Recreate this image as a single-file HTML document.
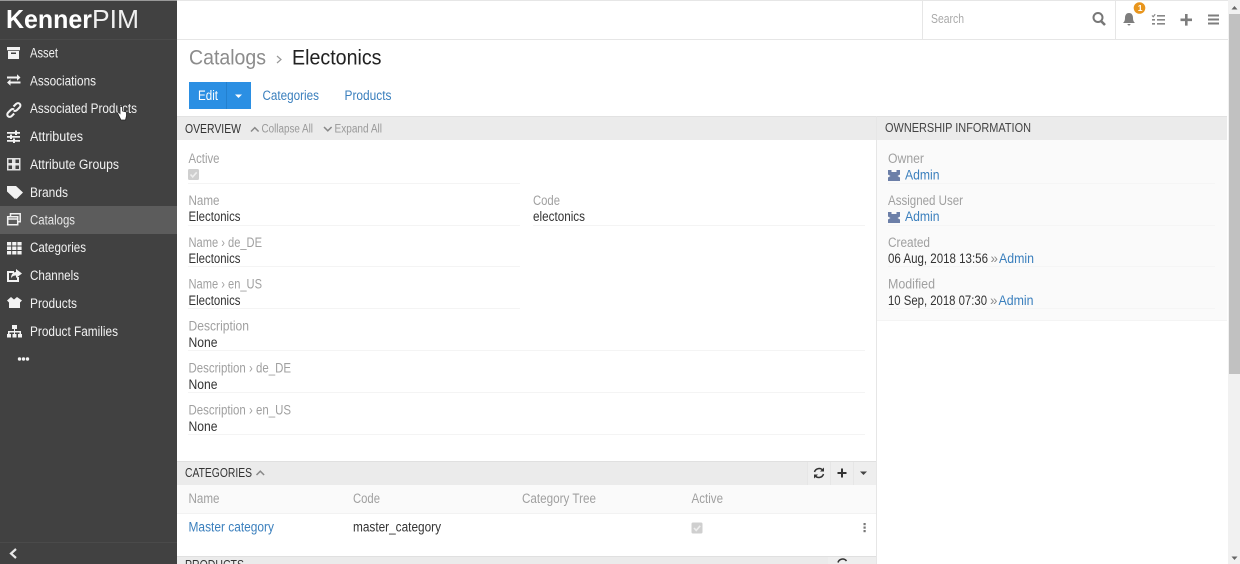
<!DOCTYPE html>
<html><head><meta charset="utf-8"><title>Electonics</title>
<style>
html,body{margin:0;padding:0;width:1240px;height:564px;overflow:hidden;background:#fff}
svg{display:block;position:absolute;left:0;top:0}
text{font-family:"Liberation Sans",sans-serif;font-size:13.400px}
.s{fill:#f2f2f2}.l{fill:#a0a0a0}.v{fill:#333}.a{fill:#3a7fbd}.g{fill:#8a8a8a}
</style></head><body>
<svg width="1240" height="564" viewBox="0 0 1240 564" xmlns="http://www.w3.org/2000/svg">
<defs><g id="chk"><rect width="11" height="11" rx="1.500" fill="#cfcfcf"/><path d="M2.500 5.500l2.200 2.400 4-4.600" fill="none" stroke="#eee" stroke-width="1.600"/></g>
<g id="usr"><path d="M0 0h3.500v2h5V0H12v4.500l-2.500 1.500L12 7.500V11H0V7.500L2.500 6 0 4.500z" fill="#6c7fa8"/></g></defs>
<!-- sidebar -->
<rect width="177" height="564" fill="#414141"/>
<rect y="0" width="177" height="1" fill="#999"/>
<rect y="39" width="177" height="1" fill="#4a4a4a"/>
<rect y="206" width="177" height="28" fill="#5c5c5c"/>
<rect y="542" width="177" height="1" fill="#4a4a4a"/>
<text x="6" y="28" font-weight="bold" fill="#fff" style="font-size:26px" textLength="86" lengthAdjust="spacingAndGlyphs">Kenner</text>
<text x="92" y="28" fill="#f0f0f0" style="font-size:26px" textLength="47" lengthAdjust="spacingAndGlyphs">PIM</text>
<text class="s" x="30" y="57.500" textLength="28" lengthAdjust="spacingAndGlyphs">Asset</text>
<text class="s" x="30" y="85.500" textLength="66" lengthAdjust="spacingAndGlyphs">Associations</text>
<text class="s" x="30" y="113" textLength="107" lengthAdjust="spacingAndGlyphs">Associated Products</text>
<text class="s" x="30" y="141" textLength="53" lengthAdjust="spacingAndGlyphs">Attributes</text>
<text class="s" x="30" y="169" textLength="89" lengthAdjust="spacingAndGlyphs">Attribute Groups</text>
<text class="s" x="30" y="197" textLength="38" lengthAdjust="spacingAndGlyphs">Brands</text>
<text fill="#e8e8e8" x="30" y="224.500" textLength="45" lengthAdjust="spacingAndGlyphs">Catalogs</text>
<text class="s" x="30" y="252" textLength="56" lengthAdjust="spacingAndGlyphs">Categories</text>
<text class="s" x="30" y="280" textLength="49" lengthAdjust="spacingAndGlyphs">Channels</text>
<text class="s" x="30" y="308" textLength="47" lengthAdjust="spacingAndGlyphs">Products</text>
<text class="s" x="30" y="336" textLength="88" lengthAdjust="spacingAndGlyphs">Product Families</text>
<!-- sidebar icons -->
<g fill="#f2f2f2">
<path d="M7 47h13v3.200H7zM8 51h11v8H8z"/><rect x="11" y="52.500" width="5" height="1.500" fill="#414141"/>
<path d="M7 76.500h10v-2.200l3.500 3.200-3.500 3.200v-2.200H7zM20.500 81.500h-10v-2.200L7 82.500l3.500 3.200v-2.200h10z"/>
<path d="M13.500 106.500l2.500-2.500c1.200-1.200 2.800-1.200 3.700-.2s1 2.500-.2 3.700l-2.500 2.500c-1 1-2.300 1.100-3.300.5M14 109.500c-1-.6-2.300-.5-3.300.5l-2.500 2.500c-1.200 1.200-1.200 2.800-.2 3.700s2.500 1 3.700-.2l2.500-2.500M11.500 111.500" fill="none" stroke="#f2f2f2" stroke-width="2"/>
<path d="M7 132h13v1.800H7zM7 136h13v1.800H7zM7 140h13v1.800H7z"/><path d="M15 130.500h2v4.500h-2zM10 134.500h2v4.500h-2zM13 138.500h2v4.500h-2z"/>
<path fill-rule="evenodd" opacity=".9" d="M7 158h13.500v12.500H7zM8.500 159.500v3.500H12v-3.500zM15.500 159.500v3.500h3.500v-3.500zM8.500 165.500v3.500H12v-3.500zM15.500 165.500v3.500h3.500v-3.500z"/><rect x="12" y="163" width="3.500" height="2.500" opacity=".9"/>
<path d="M7 186h7l7.500 6.500-6.500 6.500-8-7.500zM16 186l7 6.500-6.500 6.500-1-1 5-5.500-6.500-6.500z"/>
<path fill="none" stroke="#f2f2f2" stroke-width="1.500" d="M10.500 217v-3.200h9.700v8h-2.500M7.700 216.700h10v8h-10zM7.700 219h10"/>
<path d="M7 242h4.200v3.500H7zM12.200 242h4.200v3.500h-4.200zM17.400 242h4.200v3.500h-4.200zM7 246.500h4.200V250H7zM12.200 246.500h4.200V250h-4.200zM17.400 246.500h4.200V250h-4.200zM7 251h4.200v3.500H7zM12.200 251h4.200v3.500h-4.200zM17.400 251h4.200v3.500h-4.200z"/>
<path d="M7 271h7v2H9v7h8v-3h2v5H7z"/><path d="M16 269l6 4.500-6 4.500v-2.500c-2 0-4 .5-5 3 0-4 2-6.500 5-6.500z"/>
<path d="M7 300.500l4-3.500 3 2.500 3-2.500 5 3.500-2 2v5.500H9V302.500z"/>
<path d="M12 325h5v4h-5zM14 329h1v2h6v3h-1.500v-1.500H15v1.500h-1v-1.500H9.500v1.500H8v-3h6z"/><path d="M7 334h4v3.500H7zM12.500 334h4v3.500h-4zM18 334h4v3.500h-4z"/>
<circle cx="19.500" cy="359" r="1.700"/><circle cx="23.500" cy="359" r="1.700"/><circle cx="27.500" cy="359" r="1.700"/>
</g>
<path d="M16 549l-5 4.500 5 4.500" fill="none" stroke="#e8e8e8" stroke-width="2.200"/>
<!-- hand cursor -->
<path d="M120 106.500h2.500v4.500l4 1v4l-1 4h-4.500l-2.500-5-1-2 1.500-.5 1 1z" fill="#fff" stroke="#222" stroke-width=".8"/>
<!-- top bar -->
<rect x="177" y="0" width="1051" height="1" fill="#e6e6e6"/>
<rect x="177" y="39" width="1051" height="1" fill="#e6e6e6"/>
<rect x="922" y="0" width="1" height="39" fill="#e6e6e6"/>
<rect x="1115" y="0" width="1" height="39" fill="#e6e6e6"/>
<text x="931" y="23" fill="#aaa" style="font-size:12.500px" textLength="33" lengthAdjust="spacingAndGlyphs">Search</text>
<circle cx="1098" cy="17.500" r="4.500" fill="none" stroke="#777" stroke-width="2"/><path d="M1101 21l4 4" stroke="#777" stroke-width="2.600" fill="none"/>
<path d="M1129 13c3 0 4 2.500 4 5 0 3 1 4 2 5h-12c1-1 2-2 2-5 0-2.500 1-5 4-5zM1127.500 24h3c0 1-.7 1.500-1.500 1.500s-1.500-.5-1.500-1.500z" fill="#7d7d7d"/>
<circle cx="1139.500" cy="8" r="5.800" fill="#e8951c"/><text x="1137.800" y="11" fill="#fff" font-weight="bold" style="font-size:8.500px">1</text>
<path d="M1157 15h8v1.600h-8zM1157 19h8v1.600h-8zM1157 23h8v1.600h-8zM1152 19h3v1.600h-3zM1152 23h3v1.600h-3z" fill="#888"/><path d="M1152 15.500l1.200 1.200 2-2.500" stroke="#888" fill="none" stroke-width="1.200"/>
<path d="M1185 14h2.600v4.500h4.400v2.600h-4.400v4.500H1185v-4.500h-4.500v-2.600h4.500z" fill="#7d7d7d"/>
<path d="M1208 14.500h11v2h-11zM1208 18.500h11v2h-11zM1208 22.500h11v2h-11z" fill="#7d7d7d"/>
<!-- title -->
<text x="189" y="64.500" fill="#8c8c8c" style="font-size:21.500px" textLength="77" lengthAdjust="spacingAndGlyphs">Catalogs</text>
<path d="M277 56l4 3.500-4 3.500" fill="none" stroke="#999" stroke-width="1.200"/>
<text x="292" y="64.500" fill="#222" style="font-size:21.500px" textLength="89.500" lengthAdjust="spacingAndGlyphs">Electonics</text>
<!-- buttons -->
<rect x="189" y="82" width="62" height="27" fill="#2b8fe3"/>
<rect x="226" y="82" width="1" height="27" fill="#2380cf"/>
<text x="198" y="100" fill="#fff" textLength="20" lengthAdjust="spacingAndGlyphs">Edit</text>
<path d="M235 94.500h7l-3.500 3.500z" fill="#fff"/>
<text class="a" x="262.500" y="100" textLength="56.500" lengthAdjust="spacingAndGlyphs">Categories</text>
<text class="a" x="344.500" y="100" textLength="47" lengthAdjust="spacingAndGlyphs">Products</text>
<!-- overview head -->
<rect x="177" y="117" width="699" height="23" fill="#ebebeb"/>
<rect x="177" y="116" width="699" height="1" fill="#e2e2e2"/>
<text x="185" y="133" fill="#333" style="font-size:13px" textLength="56" lengthAdjust="spacingAndGlyphs">OVERVIEW</text>
<path d="M251 131.500l3.800-3.800 3.800 3.800" fill="none" stroke="#888" stroke-width="1.500"/>
<text x="261.500" y="132.500" fill="#999" style="font-size:11.500px" textLength="51.500" lengthAdjust="spacingAndGlyphs">Collapse All</text>
<path d="M324 127l3.800 3.800 3.800-3.800" fill="none" stroke="#888" stroke-width="1.500"/>
<text x="334.500" y="132.500" fill="#999" style="font-size:11.500px" textLength="47.500" lengthAdjust="spacingAndGlyphs">Expand All</text>
<!-- fields -->
<text class="l" x="188.500" y="163" textLength="31" lengthAdjust="spacingAndGlyphs">Active</text>
<use href="#chk" x="188" y="169"/>
<rect x="188" y="183" width="332" height="1" fill="#f4f4f4"/>
<text class="l" x="188.500" y="205" textLength="31" lengthAdjust="spacingAndGlyphs">Name</text>
<text class="v" x="188.500" y="221" textLength="52" lengthAdjust="spacingAndGlyphs">Electonics</text>
<rect x="188" y="225" width="332" height="1" fill="#f4f4f4"/>
<text class="l" x="533" y="205" textLength="27" lengthAdjust="spacingAndGlyphs">Code</text>
<text class="v" x="533" y="221" textLength="52" lengthAdjust="spacingAndGlyphs">electonics</text>
<rect x="533" y="225" width="332" height="1" fill="#f4f4f4"/>
<text class="l" x="188.500" y="247" textLength="73.500" lengthAdjust="spacingAndGlyphs">Name › de_DE</text>
<text class="v" x="188.500" y="263" textLength="52" lengthAdjust="spacingAndGlyphs">Electonics</text>
<rect x="188" y="266" width="332" height="1" fill="#f4f4f4"/>
<text class="l" x="188.500" y="288.500" textLength="73.500" lengthAdjust="spacingAndGlyphs">Name › en_US</text>
<text class="v" x="188.500" y="305" textLength="52" lengthAdjust="spacingAndGlyphs">Electonics</text>
<rect x="188" y="308" width="332" height="1" fill="#f4f4f4"/>
<text class="l" x="188.500" y="330.500" textLength="60.500" lengthAdjust="spacingAndGlyphs">Description</text>
<text class="v" x="188.500" y="347" textLength="29" lengthAdjust="spacingAndGlyphs">None</text>
<rect x="188" y="350" width="677" height="1" fill="#f4f4f4"/>
<text class="l" x="188.500" y="372.500" textLength="102.500" lengthAdjust="spacingAndGlyphs">Description › de_DE</text>
<text class="v" x="188.500" y="389" textLength="29" lengthAdjust="spacingAndGlyphs">None</text>
<rect x="188" y="392" width="677" height="1" fill="#f4f4f4"/>
<text class="l" x="188.500" y="414.500" textLength="102.500" lengthAdjust="spacingAndGlyphs">Description › en_US</text>
<text class="v" x="188.500" y="431" textLength="29" lengthAdjust="spacingAndGlyphs">None</text>
<rect x="188" y="434" width="677" height="1" fill="#f4f4f4"/>
<!-- categories -->
<rect x="177" y="461" width="699" height="1" fill="#e0e0e0"/>
<rect x="177" y="462" width="699" height="23" fill="#ebebeb"/>
<rect x="808" y="462" width="68" height="23" fill="#eeeeee"/>
<rect x="830" y="462" width="1" height="23" fill="#e6e6e6"/><rect x="853" y="462" width="1" height="23" fill="#e6e6e6"/><rect x="807" y="462" width="1" height="23" fill="#e6e6e6"/>
<text x="185" y="477" fill="#333" style="font-size:13px" textLength="67" lengthAdjust="spacingAndGlyphs">CATEGORIES</text>
<path d="M256.500 475l3.800-3.800 3.800 3.800" fill="none" stroke="#888" stroke-width="1.500"/>
<path d="M814.500 472a4.800 4.800 0 0 1 8.500-1.500M823.500 474a4.800 4.800 0 0 1-8.500 1.500" fill="none" stroke="#333" stroke-width="1.500"/>
<path d="M824 467.500v4h-4zM814 478.500v-4h4z" fill="#333"/>
<path d="M841 468.500h2v3.500h3.500v2H843v3.500h-2V474h-3.500v-2h3.500z" fill="#333"/>
<path d="M860 471.500h7l-3.500 3.500z" fill="#444"/>
<rect x="177" y="485" width="699" height="29" fill="#fafafa"/>
<rect x="177" y="513" width="699" height="1" fill="#f2f2f2"/>
<text class="l" x="188.500" y="503" textLength="31" lengthAdjust="spacingAndGlyphs">Name</text>
<text class="l" x="353" y="503" textLength="27" lengthAdjust="spacingAndGlyphs">Code</text>
<text class="l" x="522" y="503" textLength="74" lengthAdjust="spacingAndGlyphs">Category Tree</text>
<text class="l" x="691.500" y="503" textLength="31.500" lengthAdjust="spacingAndGlyphs">Active</text>
<text class="a" x="188.500" y="531.500" textLength="85.500" lengthAdjust="spacingAndGlyphs">Master category</text>
<text class="v" x="353" y="531.500" textLength="88" lengthAdjust="spacingAndGlyphs">master_category</text>
<use href="#chk" x="691.500" y="522.500"/>
<g fill="#777"><rect x="863.500" y="523" width="2.200" height="2.200"/><rect x="863.500" y="526.500" width="2.200" height="2.200"/><rect x="863.500" y="530" width="2.200" height="2.200"/></g>
<!-- products -->
<rect x="177" y="556" width="699" height="1" fill="#e0e0e0"/>
<rect x="177" y="557" width="699" height="7" fill="#ebebeb"/>
<rect x="828" y="557" width="48" height="7" fill="#eeeeee"/>
<text x="185" y="569" fill="#333" style="font-size:13px" textLength="59" lengthAdjust="spacingAndGlyphs">PRODUCTS</text>
<path d="M838 562.500a4.800 4.800 0 0 1 8.500-1.500" fill="none" stroke="#333" stroke-width="1.500"/>
<!-- right panel -->
<rect x="876" y="116" width="1" height="448" fill="#e6e6e6"/>
<rect x="877" y="140" width="350" height="180" fill="#fafafa"/>
<rect x="877" y="320" width="350" height="1" fill="#f4f4f4"/>
<rect x="877" y="116" width="350" height="1" fill="#e2e2e2"/>
<rect x="877" y="117" width="350" height="23" fill="#ebebeb"/>
<text x="885" y="132" fill="#444" style="font-size:13px" textLength="146" lengthAdjust="spacingAndGlyphs">OWNERSHIP INFORMATION</text>
<text class="l" x="888" y="163" textLength="36" lengthAdjust="spacingAndGlyphs">Owner</text>
<use href="#usr" x="888" y="170"/>
<text class="a" x="905" y="179.500" textLength="34.500" lengthAdjust="spacingAndGlyphs">Admin</text>
<rect x="888" y="183" width="327" height="1" fill="#f5f5f5"/>
<text class="l" x="888" y="205" textLength="75" lengthAdjust="spacingAndGlyphs">Assigned User</text>
<use href="#usr" x="888" y="212"/>
<text class="a" x="905" y="221" textLength="34.500" lengthAdjust="spacingAndGlyphs">Admin</text>
<rect x="888" y="225" width="327" height="1" fill="#f5f5f5"/>
<text class="l" x="888" y="247" textLength="42" lengthAdjust="spacingAndGlyphs">Created</text>
<text class="v" x="888" y="263" textLength="100" lengthAdjust="spacingAndGlyphs">06 Aug, 2018 13:56</text>
<text class="g" x="990.500" y="263">»</text>
<text class="a" x="999" y="263" textLength="35" lengthAdjust="spacingAndGlyphs">Admin</text>
<rect x="888" y="266" width="327" height="1" fill="#f5f5f5"/>
<text class="l" x="888" y="288.500" textLength="47" lengthAdjust="spacingAndGlyphs">Modified</text>
<text class="v" x="888" y="305" textLength="99" lengthAdjust="spacingAndGlyphs">10 Sep, 2018 07:30</text>
<text class="g" x="990" y="305">»</text>
<text class="a" x="998.500" y="305" textLength="35" lengthAdjust="spacingAndGlyphs">Admin</text>
<rect x="888" y="308" width="327" height="1" fill="#f5f5f5"/>
<!-- scrollbar -->
<rect x="1228" y="0" width="12" height="564" fill="#f1f1f1"/>
<rect x="1229" y="14" width="11" height="360" fill="#c1c1c1"/>
<path d="M1234.500 6l-3 3.500h6zM1234.500 560l-3-3.500h6z" fill="#666"/>
</svg>
</body></html>
